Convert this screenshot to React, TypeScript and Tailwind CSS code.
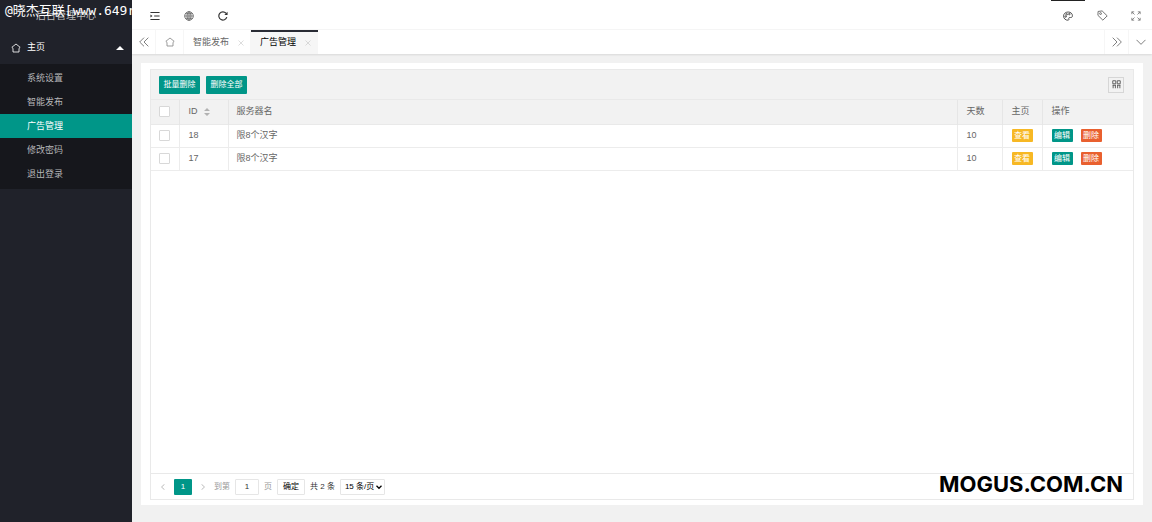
import React, { useState } from 'react';

type IconProps = {
  className?: string;
  size?: number;
  strokeWidth?: number;
  children: React.ReactNode;
};

type Server = {
  id: number;
  name: string;
  days: number;
};

const MENU = ['系统设置', '智能发布', '广告管理', '修改密码', '退出登录'];

const SERVERS: Server[] = [
  { id: 18, name: '限8个汉字', days: 10 },
  { id: 17, name: '限8个汉字', days: 10 },
];

const Icon = ({
  className = '',
  size = 10,
  strokeWidth = 1,
  children,
}: IconProps): React.JSX.Element => (
  <svg
    width={size}
    height={size}
    viewBox="0 0 12 12"
    fill="none"
    stroke="currentColor"
    strokeWidth={strokeWidth}
    aria-hidden="true"
    className={`shrink-0 ${className}`}
  >
    {children}
  </svg>
);

const HomeIcon = ({ className }: { className?: string }) => (
  <Icon size={10} className={className}>
    <path d="M6 1.2 11 5.200 9.600 6.400V10.800H2.400V6.400L1 5.200Z" strokeLinejoin="round" />
  </Icon>
);

const Sidebar = () => (
  <aside className="relative w-[132px] shrink-0 overflow-hidden bg-[#20222a]">
    <div className="flex h-[30px] items-center justify-center text-[10px] text-white/70">
      后台管理中心
    </div>
    <div className="absolute top-[2px] left-[5px] font-['DejaVu_Sans_Mono','Noto_Sans_CJK_SC',monospace] text-[13px] leading-[17px] whitespace-nowrap text-white">
      @晓杰互联[www.649r
    </div>
    <nav>
      <button
        type="button"
        className="flex h-[34px] w-full items-center gap-[6px] pt-0.5 pr-2 pl-[11px] text-[9px] text-white"
      >
        <HomeIcon />
        <span>主页</span>
        <svg width="8" height="4" viewBox="0 0 8 4" className="ml-auto" aria-hidden="true">
          <path d="M0 4 4 0l4 4Z" fill="white" />
        </svg>
      </button>
      <ul className="bg-[#16171c] pt-[2px] pb-[3px]">
        {MENU.map((item) => (
          <li key={item}>
            <a
              href="#"
              className={`flex h-6 items-center pt-0.5 pl-[27px] text-[9px] ${
                item === '广告管理' ? 'bg-[#009688] text-white' : 'text-[#b5b6b8]'
              }`}
            >
              {item}
            </a>
          </li>
        ))}
      </ul>
    </nav>
  </aside>
);

const Header = () => (
  <header className="flex h-[30px] items-stretch justify-between border-b border-[#f6f6f6] bg-white text-[#333]">
    <div className="flex pt-0.5">
      <button type="button" aria-label="菜单" className="flex w-[34px] items-center justify-center pl-3">
        <Icon size={10} strokeWidth={1.2}>
          <path d="M.5 1.800h11M5 6h6.500M.5 10.200h11" />
          <path d="M.5 4.200 3 6 .5 7.800Z" fill="currentColor" stroke="none" />
        </Icon>
      </button>
      <button type="button" aria-label="网站" className="flex w-[34px] items-center justify-center pl-3 text-[#666]">
        <Icon size={10}>
          <circle cx="6" cy="6" r="5.2" />
          <ellipse cx="6" cy="6" rx="2.4" ry="5.2" />
          <path d="M.8 6h10.4M6 .8v10.4M1.6 3.3h8.8M1.6 8.7h8.8" />
        </Icon>
      </button>
      <button type="button" aria-label="刷新" className="flex w-[34px] items-center justify-center pl-3">
        <Icon size={10} strokeWidth={1.4}>
          <path d="M10.6 7.4A4.9 4.9 0 1 1 9.6 2.7" />
          <path d="M11.5.8v4H7.6Z" fill="currentColor" stroke="none" />
        </Icon>
      </button>
    </div>
    <div className="flex">
      <button
        type="button"
        aria-label="主题"
        className="flex w-[34px] items-center justify-center border-t border-[#222] pt-px"
      >
        <Icon size={10}>
          <path d="M6.5 11C3 11.4.7 9 .7 6.1.7 3.2 3.1 1.2 6.2 1.2s5.1 2 5.1 4.5c0 1.600-1 2.300-2.300 2.100-1.600-.3-2.400.4-2.100 1.400.3.9.2 1.700-.4 1.800Z" />
          <circle cx="3.200" cy="6.600" r=".9" />
          <circle cx="4.400" cy="4" r=".9" />
          <circle cx="7.600" cy="3.700" r=".9" />
        </Icon>
      </button>
      <button type="button" aria-label="便签" className="flex w-[34px] items-center justify-center pt-0.5 text-[#666]">
        <Icon size={11}>
          <path d="M1.200 1.600 5.600 1l5.500 5.400-4.700 4.700L1 5.800Z" strokeLinejoin="round" />
          <circle cx="3.900" cy="3.900" r="1" />
        </Icon>
      </button>
      <button type="button" aria-label="全屏" className="flex w-[33px] items-center justify-center pt-0.5 text-[#777]">
        <Icon size={10}>
          <path d="M1 3.800V1h2.800M8.200 1H11v2.800M11 8.200V11H8.200M3.800 11H1V8.200M1 1l3.200 3.200M11 1 7.800 4.200M11 11 7.800 7.800M1 11l3.200-3.200" />
        </Icon>
      </button>
    </div>
  </header>
);

const Tabs = () => (
  <div className="flex h-6 items-stretch bg-white text-[9px] text-[#666] shadow-[0_1px_2px_rgba(0,0,0,0.1)]">
    <button type="button" aria-label="向左" className="flex w-6 items-center justify-center border-r border-[#f6f6f6]">
      <Icon size={10}>
        <path d="M6 .8.8 6 6 11.200M11.200.8 6 6l5.200 5.200" />
      </Icon>
    </button>
    <button
      type="button"
      aria-label="主页"
      className="flex w-[28px] items-center justify-center border-r border-[#f6f6f6] text-[#888]"
    >
      <HomeIcon />
    </button>
    <div className="flex w-[67px] items-center justify-between border-r border-[#f6f6f6] pt-0.5 pr-[6px] pl-[9px]">
      <a href="#">智能发布</a>
      <button type="button" aria-label="关闭智能发布" className="text-[#bbb]">
        <Icon size={6}>
          <path d="m1 1 10 10M11 1 1 11" />
        </Icon>
      </button>
    </div>
    <div className="flex w-[67px] items-center justify-between border-t-2 border-[#292b34] bg-[#f6f6f6] pr-[7px] pl-[9px] text-black">
      <a href="#">广告管理</a>
      <button type="button" aria-label="关闭广告管理" className="text-[#bbb]">
        <Icon size={6}>
          <path d="m1 1 10 10M11 1 1 11" />
        </Icon>
      </button>
    </div>
    <button
      type="button"
      aria-label="向右"
      className="ml-auto flex w-6 items-center justify-center border-l border-[#f6f6f6]"
    >
      <Icon size={10}>
        <path d="M.8.8 6 6 .8 11.200M6 .8 11.200 6 6 11.200" />
      </Icon>
    </button>
    <button type="button" aria-label="更多" className="flex w-6 items-center justify-center border-l border-[#f6f6f6]">
      <Icon size={10}>
        <path d="m.6 3.400 5.400 5.400 5.400-5.400" />
      </Icon>
    </button>
  </div>
);

const Checkbox = ({ label }: { label: string }) => (
  <input
    type="checkbox"
    aria-label={label}
    className="mx-auto block size-[11px] appearance-none rounded-[1px] border border-[#d8d8d8] bg-white checked:bg-[#009688]"
  />
);

const SmallButton = ({ className, children }: { className: string; children: React.ReactNode }) => (
  <button
    type="button"
    className={`flex h-[13px] w-[21px] items-center justify-center rounded-[1px] text-[8px] text-white ${className}`}
  >
    {children}
  </button>
);

const ServerTable = () => (
  <table className="w-full table-fixed border-collapse text-left text-[9px] text-[#666]">
    <colgroup>
      <col className="w-[28px]" />
      <col className="w-[49px]" />
      <col />
      <col className="w-[45px]" />
      <col className="w-[40px]" />
      <col className="w-[91px]" />
    </colgroup>
    <thead className="bg-[#f2f2f2]">
      <tr className="h-6 border-b border-[#e9e9e9] *:border-r *:border-[#e6e6e6] *:font-normal *:last:border-r-0">
        <th>
          <Checkbox label="全选" />
        </th>
        <th className="pl-[9px]">
          <span className="flex items-center gap-[6px]">
            ID
            <svg width="6" height="8" viewBox="0 0 6 8" fill="#b2b2b2" aria-hidden="true">
              <path d="M0 3 3 0l3 3ZM0 5l3 3 3-3Z" />
            </svg>
          </span>
        </th>
        <th className="pl-2">服务器名</th>
        <th className="pl-[9px]">天数</th>
        <th className="pl-[9px]">主页</th>
        <th className="pl-[9px]">操作</th>
      </tr>
    </thead>
    <tbody>
      {SERVERS.map((server) => (
        <tr
          key={server.id}
          className="h-[23px] border-b border-[#ececec] *:border-r *:border-[#ececec] *:last:border-r-0"
        >
          <td>
            <Checkbox label={`选择 ${server.id}`} />
          </td>
          <td className="pl-[9px]">{server.id}</td>
          <td className="pl-2">{server.name}</td>
          <td className="pl-[9px]">{server.days}</td>
          <td className="pl-[9px]">
            <SmallButton className="bg-[#f7b824]">查看</SmallButton>
          </td>
          <td className="pl-[9px]">
            <div className="flex gap-2">
              <SmallButton className="bg-[#009688]">编辑</SmallButton>
              <SmallButton className="bg-[#e9602f]">删除</SmallButton>
            </div>
          </td>
        </tr>
      ))}
    </tbody>
  </table>
);

const Pagination = () => {
  const [page, setPage] = useState('1');

  return (
    <div className="flex h-[26px] items-center gap-[5px] border-t border-[#e9e9e9] pl-[9px] text-[8px] text-[#333]">
      <button type="button" aria-label="上一页" className="mr-[3px] text-[#bbb]">
        <Icon size={6} strokeWidth={2}>
          <path d="M9 .5 3 6l6 5.500" />
        </Icon>
      </button>
      <button type="button" className="h-4 w-[18px] rounded-[1px] bg-[#009688] text-white">
        1
      </button>
      <button type="button" aria-label="下一页" className="mx-[3px] text-[#bbb]">
        <Icon size={6} strokeWidth={2}>
          <path d="m3 .5 6 5.500-6 5.500" />
        </Icon>
      </button>
      <label htmlFor="page" className="text-[#999]">
        到第
      </label>
      <input
        id="page"
        value={page}
        onChange={(e) => setPage(e.target.value)}
        className="h-4 w-6 rounded-[1px] border border-[#e6e6e6] text-center"
      />
      <span className="text-[#999]">页</span>
      <button type="button" className="h-4 w-7 rounded-[1px] border border-[#e6e6e6] text-black">
        确定
      </button>
      <span>共 2 条</span>
      <div className="relative">
        <select
          aria-label="每页条数"
          className="h-4 w-[45px] appearance-none rounded-[1px] border border-[#e6e6e6] bg-white pl-1 text-black"
        >
          <option>15 条/页</option>
          <option>30 条/页</option>
        </select>
        <Icon size={6} strokeWidth={2.500} className="pointer-events-none absolute top-[5px] right-[3px] text-black">
          <path d="m1 3.500 5 5 5-5" />
        </Icon>
      </div>
    </div>
  );
};

const App = (): React.JSX.Element => {
  return (
    <div className="flex h-screen bg-[#f1f1f1] font-['Liberation_Sans','Noto_Sans_CJK_SC',sans-serif]">
      <Sidebar />
      <div className="flex min-w-0 flex-1 flex-col">
        <Header />
        <Tabs />
        <main className="flex min-h-0 flex-1 flex-col px-[9px] pt-[9px] pb-[17px]">
          <div className="relative flex flex-1 flex-col bg-white px-[9px] pt-[6px] pb-[5px]">
            <section className="flex flex-1 flex-col border border-[#e9e9e9]">
              <div className="flex h-[30px] items-center gap-[6px] border-b border-[#e9e9e9] bg-[#f2f2f2] pr-[9px] pl-2 text-[8px]">
                <button type="button" className="h-[18px] w-[41px] rounded-[1px] bg-[#009688] text-white">
                  批量删除
                </button>
                <button type="button" className="h-[18px] w-[41px] rounded-[1px] bg-[#009688] text-white">
                  删除全部
                </button>
                <button
                  type="button"
                  aria-label="筛选列"
                  className="ml-auto flex size-4 items-center justify-center border border-[#d6d6d6] text-[#555]"
                >
                  <Icon size={9} strokeWidth={1.200}>
                    <path d="M1 1h4v4H1ZM7 1h4v4H7ZM1.500 6.500V11M4.500 6.500V11M7.500 6.500V11M10.500 6.500V11M1 7h4M7 7h4" />
                  </Icon>
                </button>
              </div>
              <ServerTable />
              <div className="flex-1" />
              <Pagination />
            </section>
            <div className="pointer-events-none absolute right-5 bottom-[7px] font-[Inter,sans-serif] text-[22px] leading-7 font-bold text-black">
              MOGUS.COM.CN
            </div>
          </div>
        </main>
      </div>
    </div>
  );
};

export default App;
